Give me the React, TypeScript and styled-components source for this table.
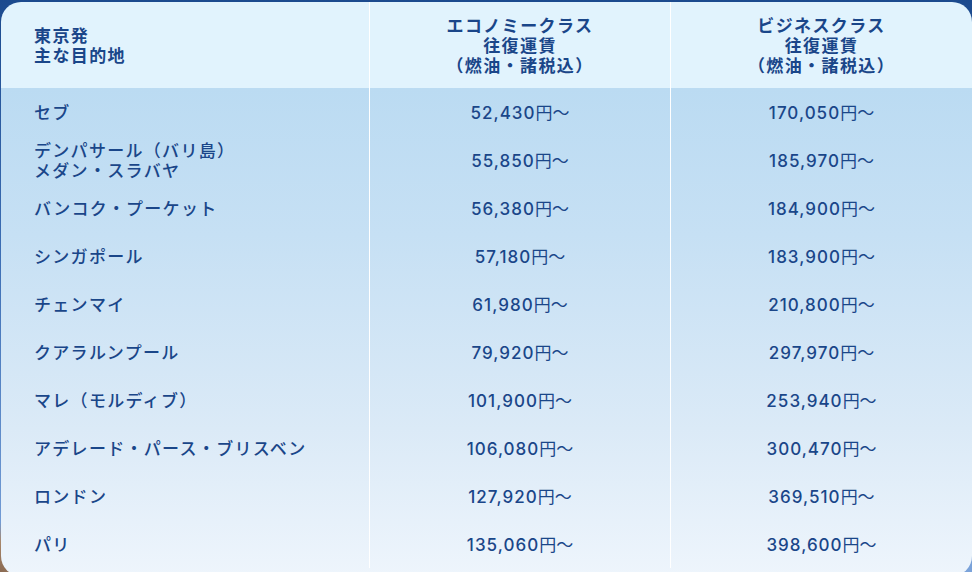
import React from "react";
import styled, { createGlobalStyle } from "styled-components";

const Global = createGlobalStyle`
  html, body { margin: 0; padding: 0; }
  body {
    width: 972px;
    height: 572px;
    overflow: hidden;
    background:
      radial-gradient(ellipse 60px 50px at 0px 572px, #8a6a52 0%, #a8876a 60%, rgba(168,135,106,0) 100%),
      linear-gradient(180deg, #1b4a8e 0%, #3d6fb5 45%, #7ba3da 100%);
    font-family: "Noto Sans CJK JP", "Noto Sans", sans-serif;
  }
`;

const Page = styled.div`
  padding: 2px 0 0 1px;
  height: 572px;
  box-sizing: border-box;
`;

const Table = styled.div`
  border-radius: 20px;
  overflow: hidden;
  height: 574px;
  display: flex;
  flex-direction: column;
  color: #1a4689;
`;

const HeaderRow = styled.div`
  display: grid;
  grid-template-columns: 368px 301px 1fr;
  height: 86px;
  background: #e1f3fd;
`;

const Body = styled.div`
  flex: 1;
  background:
    radial-gradient(ellipse 220px 70px at 90px 590px, rgba(255,255,255,0.75) 0%, rgba(255,255,255,0) 100%),
    linear-gradient(180deg, #bbdbf2 0%, #c6e0f4 30%, #dbeaf7 70%, #eef5fc 100%);
`;

const Row = styled.div`
  display: grid;
  grid-template-columns: 368px 301px 1fr;
  height: 48px;
`;

const Cell = styled.div<{ $align?: "left" | "center"; $divider?: boolean }>`
  display: flex;
  flex-direction: column;
  justify-content: center;
  align-items: ${(p) => (p.$align === "left" ? "flex-start" : "center")};
  text-align: ${(p) => (p.$align === "left" ? "left" : "center")};
  padding-left: ${(p) => (p.$align === "left" ? "33px" : "0")};
  border-left: ${(p) => (p.$divider ? "1px solid #ffffff" : "none")};
`;

const HeadText = styled.div`
  font-family: "Noto Sans CJK JP", sans-serif;
  font-weight: 700;
  font-size: 17px;
  line-height: 20px;
  letter-spacing: 1.4px;
  white-space: nowrap;
`;

const Dest = styled.div`
  font-family: "Noto Sans CJK JP", sans-serif;
  font-weight: 500;
  font-size: 17px;
  line-height: 20px;
  letter-spacing: 1.3px;
  white-space: nowrap;
`;

const Price = styled.div`
  font-family: "Inter", "Noto Sans CJK JP", sans-serif;
  font-weight: 500;
  font-size: 17px;
  line-height: 20px;
  letter-spacing: 0.06em;
  white-space: nowrap;
`;

const Yen = styled.span`
  font-family: "Noto Sans CJK JP", sans-serif;
  font-weight: 400;
  letter-spacing: 0;
`;

const rows: [string[], string, string][] = [
  [["セブ"], "52,430", "170,050"],
  [["デンパサール（バリ島）", "メダン・スラバヤ"], "55,850", "185,970"],
  [["バンコク・プーケット"], "56,380", "184,900"],
  [["シンガポール"], "57,180", "183,900"],
  [["チェンマイ"], "61,980", "210,800"],
  [["クアラルンプール"], "79,920", "297,970"],
  [["マレ（モルディブ）"], "101,900", "253,940"],
  [["アデレード・パース・ブリスベン"], "106,080", "300,470"],
  [["ロンドン"], "127,920", "369,510"],
  [["パリ"], "135,060", "398,600"],
];

const PriceText = ({ v }: { v: string }) => (
  <Price>
    {v}
    <Yen>円〜</Yen>
  </Price>
);

export default function App() {
  return (
    <>
      <Global />
      <Page>
        <Table>
          <HeaderRow>
            <Cell $align="left">
              <HeadText>東京発</HeadText>
              <HeadText>主な目的地</HeadText>
            </Cell>
            <Cell $divider>
              <HeadText>エコノミークラス</HeadText>
              <HeadText>往復運賃</HeadText>
              <HeadText>（燃油・諸税込）</HeadText>
            </Cell>
            <Cell $divider>
              <HeadText>ビジネスクラス</HeadText>
              <HeadText>往復運賃</HeadText>
              <HeadText>（燃油・諸税込）</HeadText>
            </Cell>
          </HeaderRow>
          <Body>
            {rows.map(([names, eco, biz], i) => (
              <Row key={i}>
                <Cell $align="left">
                  {names.map((n) => (
                    <Dest key={n}>{n}</Dest>
                  ))}
                </Cell>
                <Cell $divider>
                  <PriceText v={eco} />
                </Cell>
                <Cell $divider>
                  <PriceText v={biz} />
                </Cell>
              </Row>
            ))}
          </Body>
        </Table>
      </Page>
    </>
  );
}
